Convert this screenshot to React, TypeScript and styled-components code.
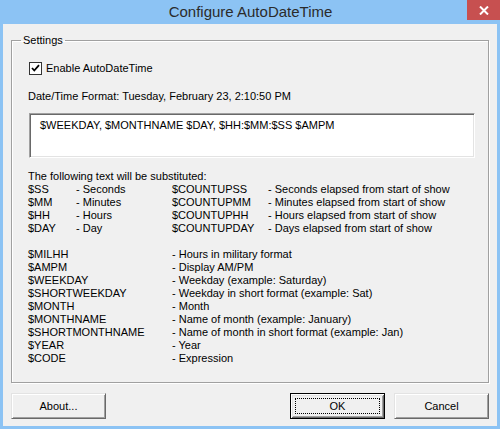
import styled, { createGlobalStyle } from 'styled-components';

const GlobalStyle = createGlobalStyle`
	html, body {
		margin: 0;
		padding: 0;
		background: #8cc3f4;
	}
	body {
		font-family: "Liberation Sans", Arial, sans-serif;
		font-size: 11px;
		color: #000;
	}
`;

type Token = { code: string; desc: string };

const counters: [Token, Token][] = [
	[
		{ code: '$SS', desc: '- Seconds' },
		{ code: '$COUNTUPSS', desc: '- Seconds elapsed from start of show' },
	],
	[
		{ code: '$MM', desc: '- Minutes' },
		{ code: '$COUNTUPMM', desc: '- Minutes elapsed from start of show' },
	],
	[
		{ code: '$HH', desc: '- Hours' },
		{ code: '$COUNTUPHH', desc: '- Hours elapsed from start of show' },
	],
	[
		{ code: '$DAY', desc: '- Day' },
		{ code: '$COUNTUPDAY', desc: '- Days elapsed from start of show' },
	],
];

const others: Token[] = [
	{ code: '$MILHH', desc: '- Hours in military format' },
	{ code: '$AMPM', desc: '- Display AM/PM' },
	{ code: '$WEEKDAY', desc: '- Weekday (example: Saturday)' },
	{ code: '$SHORTWEEKDAY', desc: '- Weekday in short format (example: Sat)' },
	{ code: '$MONTH', desc: '- Month' },
	{ code: '$MONTHNAME', desc: '- Name of month (example: January)' },
	{ code: '$SHORTMONTHNAME', desc: '- Name of month in short format (example: Jan)' },
	{ code: '$YEAR', desc: '- Year' },
	{ code: '$CODE', desc: '- Expression' },
];

export default function App() {
	return (
		<>
			<GlobalStyle />
			<Window>
				<TitleBar>
					<span />
					<Title>Configure AutoDateTime</Title>
					<CloseBtn type="button" aria-label="Close">
						<svg width="10" height="9" viewBox="0 0 10 9">
							<path d="M1 0.5 L9 8.5 M9 0.5 L1 8.5" stroke="#fff" strokeWidth="2" />
						</svg>
					</CloseBtn>
				</TitleBar>
				<Client>
					<Group>
						<Legend>Settings</Legend>
						<CheckRow>
							<CheckBox>
								<svg width="11" height="11" viewBox="0 0 11 11">
									<path d="M2 5 L4.3 7.5 L9 2.2" stroke="#000" strokeWidth="1.8" fill="none" />
								</svg>
							</CheckBox>
							Enable AutoDateTime
						</CheckRow>
						<Line $top={15}>Date/Time Format: Tuesday, February 23, 2:10:50 PM</Line>
						<FormatBox>$WEEKDAY, $MONTHNAME $DAY, $HH:$MM:$SS $AMPM</FormatBox>
						<Line $top={12}>The following text will be substituted:</Line>
						<CounterGrid>
							{counters.map(([a, b]) => (
								<Row key={a.code}>
									<span>{a.code}</span>
									<span>{a.desc}</span>
									<span>{b.code}</span>
									<span>{b.desc}</span>
								</Row>
							))}
						</CounterGrid>
						<OtherGrid>
							{others.map((t) => (
								<Row key={t.code}>
									<span>{t.code}</span>
									<span>{t.desc}</span>
								</Row>
							))}
						</OtherGrid>
					</Group>
					<Buttons>
						<Button type="button">About...</Button>
						<Spacer />
						<Button type="button" $default>
							<Focus>OK</Focus>
						</Button>
						<Button type="button">Cancel</Button>
					</Buttons>
				</Client>
			</Window>
		</>
	);
}

const Window = styled.div`
	width: 500px;
	height: 429px;
	display: flex;
	flex-direction: column;
	background: #8cc3f4;
	box-sizing: border-box;
	overflow: hidden;
`;

const TitleBar = styled.div`
	height: 24px;
	flex: none;
	display: grid;
	grid-template-columns: 1fr auto 1fr;
`;

const Title = styled.div`
	font-size: 15px;
	line-height: 24px;
	color: #2b2b2b;
	padding-left: 1px;
`;

const CloseBtn = styled.button`
	justify-self: end;
	align-self: start;
	width: 33px;
	height: 20px;
	border: none;
	padding: 0;
	background: #c75050;
	display: flex;
	align-items: center;
	justify-content: center;
`;

const Client = styled.div`
	flex: 1;
	margin: 0 3px 3px;
	background: #f0f0f0;
	display: flex;
	flex-direction: column;
	padding: 10px 8px 7px;
	box-sizing: border-box;
	min-height: 0;
`;

const Group = styled.fieldset`
	flex: 1;
	min-height: 0;
	margin: 0 0 10px;
	padding: 0 12px 0 16px;
	border: 1px solid #a0a0a0;
	box-shadow: inset 1px 1px #fff, 1px 1px #fff;
	line-height: 13px;
`;

const Legend = styled.legend`
	margin-left: -7px;
	padding: 0 2px;
	line-height: 13px;
	font-size: 11px;
`;

const CheckRow = styled.div`
	margin-top: 15px;
	display: flex;
	align-items: center;
	gap: 4px;
	height: 13px;
	padding-left: 1px;
`;

const CheckBox = styled.span`
	width: 13px;
	height: 13px;
	box-sizing: border-box;
	border: 1px solid #333;
	background: #fff;
	display: flex;
	align-items: center;
	justify-content: center;
`;

const Line = styled.div<{ $top: number }>`
	margin-top: ${(p) => p.$top}px;
	height: 13px;
	white-space: nowrap;
`;

const FormatBox = styled.div`
	margin: 10px 0 0 1px;
	width: 446px;
	height: 45px;
	box-sizing: border-box;
	background: #fff;
	border: 1px solid;
	border-color: #a0a0a0 #fff #fff #a0a0a0;
	box-shadow: inset 1px 1px #696969, inset -1px -1px #e3e3e3;
	padding: 5px 10px;
	white-space: nowrap;
`;

const CounterGrid = styled.div`
	display: grid;
	grid-template-columns: 48px 96px 96px 1fr;
	margin-bottom: 13px;
`;

const OtherGrid = styled.div`
	display: grid;
	grid-template-columns: 144px 1fr;
`;

const Row = styled.div`
	display: contents;

	& > span {
		height: 13px;
		white-space: nowrap;
	}
`;

const Buttons = styled.div`
	flex: none;
	display: flex;
	gap: 9px;
	height: 26px;
`;

const Spacer = styled.div`
	flex: 1;
`;

const Button = styled.button<{ $default?: boolean }>`
	width: 95px;
	height: 26px;
	box-sizing: border-box;
	padding: 0;
	font-family: "Liberation Sans", Arial, sans-serif;
	font-size: 11px;
	color: #000;
	background: #f0f0f0;
	border: 1px solid;
	border-color: ${(p) => (p.$default ? '#000' : '#e3e3e3 #696969 #696969 #e3e3e3')};
	box-shadow: ${(p) =>
		p.$default
			? 'inset 1px 1px #fff, inset -1px -1px #696969, inset 2px 2px #e3e3e3, inset -2px -2px #a0a0a0'
			: 'inset 1px 1px #fff, inset -1px -1px #a0a0a0'};
	display: flex;
	align-items: center;
	justify-content: center;
`;

const Focus = styled.span`
	display: flex;
	align-items: center;
	justify-content: center;
	width: 85px;
	height: 16px;
	border: 1px dotted #000;
	box-sizing: border-box;
`;
